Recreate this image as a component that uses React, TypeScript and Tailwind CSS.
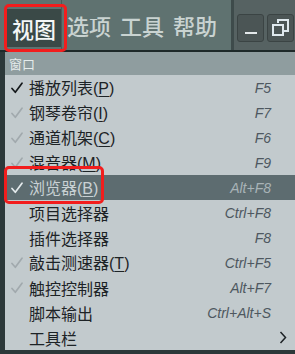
import React from "react";

type Item = {
  label: string;
  key?: string;
  shortcut?: string;
  check?: "on" | "dim" | "none";
  active?: boolean;
  submenu?: boolean;
};

const ITEMS: Item[] = [
  { label: "播放列表", key: "P", shortcut: "F5", check: "on" },
  { label: "钢琴卷帘", key: "I", shortcut: "F7", check: "dim" },
  { label: "通道机架", key: "C", shortcut: "F6", check: "dim" },
  { label: "混音器", key: "M", shortcut: "F9", check: "dim" },
  { label: "浏览器", key: "B", shortcut: "Alt+F8", check: "on", active: true },
  { label: "项目选择器", shortcut: "Ctrl+F8" },
  { label: "插件选择器", shortcut: "F8" },
  { label: "敲击测速器", key: "T", shortcut: "Ctrl+F5", check: "dim" },
  { label: "触控控制器", shortcut: "Alt+F7", check: "dim" },
  { label: "脚本输出", shortcut: "Ctrl+Alt+S" },
  { label: "工具栏", submenu: true },
];

function Check({ color }: { color: string }) {
  return (
    <svg width="12" height="12" viewBox="0 0 12 12" fill="none">
      <path d="M1 6.5 L4.3 10.3 L11 1.2" stroke={color} strokeWidth="1.7" strokeLinecap="round" strokeLinejoin="round" />
    </svg>
  );
}

function MenuRow({ item }: { item: Item }) {
  const checkColor = item.active ? "#e4eaec" : item.check === "on" ? "#15191b" : "#a1a9ad";
  return (
    <div
      className={
        "flex h-[25px] items-center pl-[6px] pr-[24px] " +
        (item.active ? "bg-[#5d6c70] text-[#c9d1d4]" : "text-[#1d2326]")
      }
    >
      <div className="flex w-[18px] items-center">
        {item.check && item.check !== "none" ? <Check color={checkColor} /> : null}
      </div>
      <span className="text-[16px] leading-none">
        {item.label}
        {item.key ? (
          <span className="font-['Liberation_Sans',sans-serif]">
            (<span className="underline decoration-1 underline-offset-2">{item.key}</span>)
          </span>
        ) : null}
      </span>
      <span
        className={
          "ml-auto font-['Liberation_Sans',sans-serif] text-[14px] italic leading-none " +
          (item.active ? "text-[#a8b3b7]" : "text-[#4e5860]")
        }
      >
        {item.shortcut}
      </span>
      {item.submenu ? (
        <svg className="-mr-[16px] ml-auto" width="8" height="13" viewBox="0 0 8 13" fill="none">
          <path d="M1.5 1 L6.5 6.5 L1.5 12" stroke="#1d2326" strokeWidth="1.5" />
        </svg>
      ) : null}
    </div>
  );
}

export default function App() {
  return (
    <div className="relative h-[354px] w-[295px] overflow-hidden bg-[#2c3839] font-['Noto_Sans_CJK_SC',sans-serif]">
      <div className="flex h-[52px] border-b-2 border-[#1e2929]">
        <div className="flex w-[231px] bg-[#5f7270]">
          <div className="mt-[9px] ml-[7px] flex h-[38px] w-[54px] items-center justify-center bg-[#3a4947] text-[22px] font-medium text-[#f4f7f7]">
            视图
          </div>
          <div className="w-px bg-[#4a5a58]" />
          <div className="flex items-center gap-[9px] pl-[5px] text-[22px] font-medium text-[#c9d3d1]">
            <span>选项</span>
            <span>工具</span>
            <span>帮助</span>
          </div>
        </div>
        <div className="w-[3px] bg-[#3e4b4b]" />
        <div className="flex flex-1 items-start gap-[3px] bg-[#566262] pt-[14px] pl-[3px]">
          <div className="flex h-[28px] w-[27px] items-end justify-center rounded-[3px] border border-[#3b4444] bg-[#4b5555] pb-[7px]">
            <div className="h-[2px] w-[12px] bg-[#e3e8ea]" />
          </div>
          <div className="flex h-[28px] w-[27px] items-center justify-center rounded-[3px] border border-[#3b4444] bg-[#4b5555]">
            <svg width="17" height="18" viewBox="0 0 17 18" fill="none">
              <path d="M6 4 V1 H16 V12 H12" stroke="#dfe9ee" strokeWidth="2" />
              <rect x="1" y="6" width="10" height="10" stroke="#dfe9ee" strokeWidth="2" />
            </svg>
          </div>
        </div>
      </div>

      <div className="ml-[5px] bg-[#c2cacd]">
        <div className="flex h-[23px] items-center bg-[#8f9d9f] pl-[4px] text-[13px] text-[#e5ebeb]">
          窗口
        </div>
        {ITEMS.map((item) => (
          <MenuRow key={item.label} item={item} />
        ))}
      </div>

      <div className="pointer-events-none absolute left-[4px] top-[4px] h-[48px] w-[63px] rounded-[5px] border-[3px] border-[#f21d1d]" />
      <div className="pointer-events-none absolute left-[4px] top-[166px] h-[38px] w-[100px] rounded-[5px] border-[3px] border-[#f21d1d]" />
    </div>
  );
}
